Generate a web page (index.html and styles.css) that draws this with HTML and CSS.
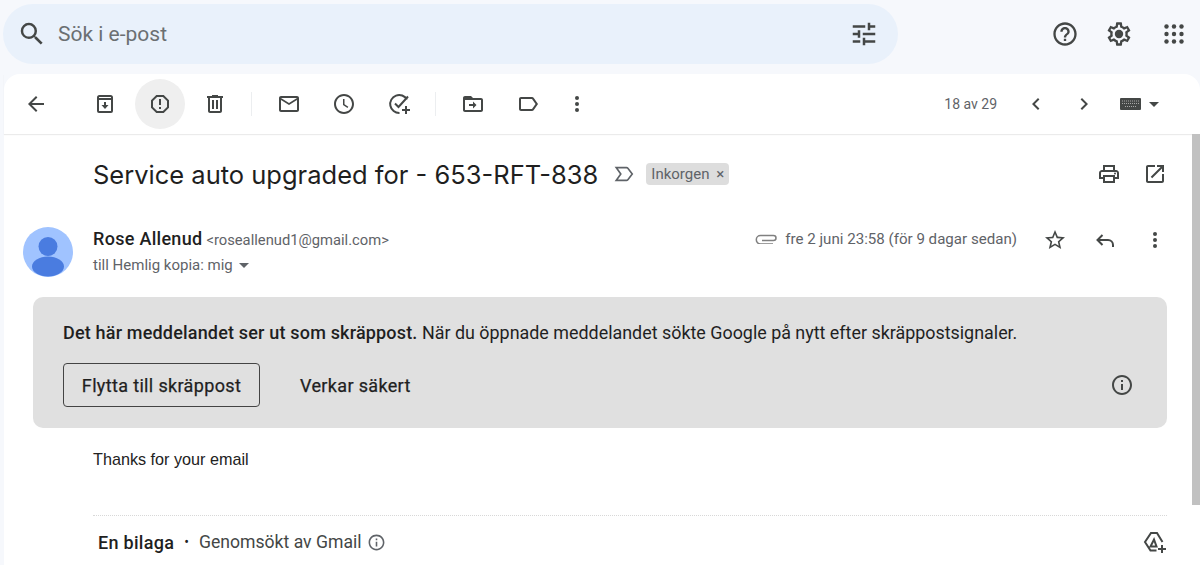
FILE: index.html
```html
<!DOCTYPE html>
<html lang="sv">
<head>
<meta charset="utf-8">
<title>Service auto upgraded for - 653-RFT-838</title>
<link rel="stylesheet" href="styles.css">
</head>
<body>
<header class="top">
  <div class="search">
    <svg class="ic search-ic" viewBox="0 0 24 24"><path d="M15.5 14h-.79l-.28-.27A6.471 6.471 0 0 0 16 9.5 6.5 6.5 0 1 0 9.5 16c1.61 0 3.09-.59 4.23-1.57l.27.28v.79l5 4.99L20.49 19l-4.99-5zm-6 0C7.01 14 5 11.99 5 9.5S7.01 5 9.5 5 14 7.01 14 9.5 11.99 14 9.5 14z"/></svg>
    <span class="search-text">Sök i e-post</span>
    <svg class="ic tune-ic" viewBox="0 0 24 24"><path d="M3 17v2h6v-2H3zM3 5v2h10V5H3zm10 16v-2h8v-2h-8v-2h-2v6h2zM7 9v2H3v2h4v2h2V9H7zm14 4v-2H11v2h10zm-6-4h2V7h4V5h-4V3h-2v6z"/></svg>
  </div>
  <div class="top-actions">
    <svg class="ic big" viewBox="0 0 24 24"><path d="M11 18h2v-2h-2v2zm1-16C6.48 2 2 6.48 2 12s4.48 10 10 10 10-4.48 10-10S17.52 2 12 2zm0 18c-4.41 0-8-3.59-8-8s3.59-8 8-8 8 3.59 8 8-3.59 8-8 8zm0-14c-2.21 0-4 1.79-4 4h2c0-1.1.9-2 2-2s2 .9 2 2c0 2-3 1.75-3 5h2c0-2.25 3-2.5 3-5 0-2.21-1.79-4-4-4z"/></svg>
    <svg class="ic big" viewBox="0 0 24 24"><path d="M19.43 12.98c.04-.32.07-.64.07-.98 0-.34-.03-.66-.07-.98l2.11-1.65c.19-.15.24-.42.12-.64l-2-3.46c-.09-.16-.26-.25-.44-.25-.06 0-.12.01-.17.03l-2.49 1c-.52-.4-1.08-.73-1.69-.98l-.38-2.65C14.46 2.18 14.25 2 14 2h-4c-.25 0-.46.18-.49.42l-.38 2.65c-.61.25-1.17.59-1.69.98l-2.49-1c-.06-.02-.12-.03-.18-.03-.17 0-.34.09-.43.25l-2 3.46c-.13.22-.07.49.12.64l2.11 1.65c-.04.32-.07.65-.07.98 0 .33.03.66.07.98l-2.11 1.65c-.19.15-.24.42-.12.64l2 3.46c.09.16.26.25.44.25.06 0 .12-.01.17-.03l2.49-1c.52.4 1.08.73 1.69.98l.38 2.65c.03.24.24.42.49.42h4c.25 0 .46-.18.49-.42l.38-2.65c.61-.25 1.17-.59 1.69-.98l2.49 1c.06.02.12.03.18.03.17 0 .34-.09.43-.25l2-3.46c.12-.22.07-.49-.12-.64l-2.11-1.65zm-1.98-1.71c.04.31.05.52.05.73 0 .21-.02.43-.05.73l-.14 1.13.89.7 1.08.84-.7 1.21-1.27-.51-1.04-.42-.9.68c-.43.32-.84.56-1.25.73l-1.06.43-.16 1.13-.2 1.35h-1.4l-.19-1.35-.16-1.13-1.06-.43c-.43-.18-.83-.41-1.23-.71l-.91-.7-1.06.43-1.27.51-.7-1.21 1.08-.84.89-.7-.14-1.13c-.03-.31-.05-.54-.05-.74s.02-.43.05-.73l.14-1.13-.89-.7-1.08-.84.7-1.21 1.27.51 1.04.42.9-.68c.43-.32.84-.56 1.25-.73l1.06-.43.16-1.13.2-1.35h1.39l.19 1.35.16 1.13 1.06.43c.43.18.83.41 1.23.71l.91.7 1.06-.43 1.27-.51.7 1.21-1.07.85-.89.7.14 1.13z"/><circle cx="12" cy="12" r="3.6"/></svg>
    <svg class="ic big" viewBox="0 0 24 24"><circle cx="4.5" cy="4.5" r="2.2"/><circle cx="12" cy="4.5" r="2.2"/><circle cx="19.5" cy="4.5" r="2.2"/><circle cx="4.5" cy="12" r="2.2"/><circle cx="12" cy="12" r="2.2"/><circle cx="19.5" cy="12" r="2.2"/><circle cx="4.5" cy="19.5" r="2.2"/><circle cx="12" cy="19.5" r="2.2"/><circle cx="19.5" cy="19.5" r="2.2"/></svg>
  </div>
</header>
<main class="panel">
  <nav class="toolbar">
    <span class="tb back"><svg class="ic" viewBox="0 0 24 24"><path d="M20 11H7.83l5.59-5.59L12 4l-8 8 8 8 1.41-1.41L7.83 13H20v-2z"/></svg></span>
    <span class="tb first"><svg class="ic" viewBox="0 0 24 24"><path d="M6.5 3h11A2.5 2.5 0 0 1 20 5.5V19a2 2 0 0 1-2 2H6a2 2 0 0 1-2-2V5.5A2.5 2.5 0 0 1 6.5 3zM6 8v11h12V8H6zm.3-3a.5.5 0 0 0-.3.5V6h12v-.5a.5.5 0 0 0-.3-.5H6.300zM11 10h2v3h2.500L12 17l-3.500-4H11v-3z"/></svg></span>
    <span class="tb active"><svg class="ic" viewBox="0 0 24 24"><path d="M15.730 3H8.270L3 8.270v7.460L8.270 21h7.460L21 15.730V8.270L15.730 3zM19 14.900L14.900 19H9.100L5 14.900V9.100L9.100 5h5.800L19 9.100v5.800zM11 7h2v6h-2zM11 15h2v2h-2z"/></svg></span>
    <span class="tb"><svg class="ic" viewBox="0 0 24 24"><path d="M15 4V3H9v1H4v2h1v13c0 1.100.9 2 2 2h10c1.100 0 2-.9 2-2V6h1V4h-5zm2 15H7V6h10v13zM9 8h2v9H9zm4 0h2v9h-2z"/></svg></span>
    <span class="sep"></span>
    <span class="tb"><svg class="ic" viewBox="0 0 24 24"><path d="M22 6c0-1.100-.9-2-2-2H4c-1.100 0-2 .9-2 2v12c0 1.100.9 2 2 2h16c1.100 0 2-.9 2-2V6zm-2 0l-8 5-8-5h16zm0 12H4V8l8 5 8-5v10z"/></svg></span>
    <span class="tb"><svg class="ic" viewBox="0 0 24 24"><path d="M11.990 2C6.470 2 2 6.480 2 12s4.470 10 9.990 10C17.520 22 22 17.520 22 12S17.520 2 11.990 2zM12 20c-4.420 0-8-3.580-8-8s3.580-8 8-8 8 3.580 8 8-3.580 8-8 8zm.5-13H11v6l4.500 3 .8-1.200-3.800-2.500z"/></svg></span>
    <span class="tb"><svg class="ic" viewBox="0 0 24 24"><path class="line" d="M20 7.500A9 9 0 1 0 12.500 21M8 11.500l3.500 3.500L21 4.500"/><path d="M18 14h2v3h3v2h-3v3h-2v-3h-3v-2h3z"/></svg></span>
    <span class="sep"></span>
    <span class="tb"><svg class="ic" viewBox="0 0 24 24"><path d="M20 6h-8l-2-2H4c-1.110 0-1.990.89-1.990 2L2 18c0 1.110.89 2 2 2h16c1.110 0 2-.89 2-2V8c0-1.110-.89-2-2-2zm0 12H4V8h16v10zM12 9.500L15.500 13 12 16.500V14H8v-2h4V9.500z"/></svg></span>
    <span class="tb"><svg class="ic" viewBox="0 0 24 24"><path d="M17.630 5.840C17.270 5.330 16.670 5 16 5L5 5.010C3.900 5.010 3 5.900 3 7v10c0 1.100.9 1.990 2 1.990L16 19c.67 0 1.270-.33 1.630-.84L22 12l-4.370-6.160zM16 17H5V7h11l3.550 5L16 17z"/></svg></span>
    <span class="tb more"><svg class="ic" viewBox="0 0 24 24"><circle cx="12" cy="6" r="2"/><circle cx="12" cy="12" r="2"/><circle cx="12" cy="18" r="2"/></svg></span>
    <span class="pager">18 av 29</span>
    <span class="nav-btn"><svg class="ic" viewBox="0 0 24 24"><path d="M15.410 7.410L14 6l-6 6 6 6 1.410-1.410L10.830 12z"/></svg></span>
    <span class="nav-btn"><svg class="ic" viewBox="0 0 24 24"><path d="M10 6L8.590 7.410 13.170 12l-4.580 4.590L10 18l6-6z"/></svg></span>
    <svg class="keys" viewBox="0 0 21 12"><rect width="21" height="12" rx="1" fill="#444746"/><path d="M2 3h17M2 5.500h17M5 8.500h11" stroke="#a8a8a8" stroke-width="1" stroke-dasharray="1 1" fill="none"/></svg>
    <i class="caret kbd-caret"></i>
  </nav>
  <div class="scroller">
    <article class="mail">
      <div class="subject-row">
        <h1 class="subject">Service auto upgraded for - 653-RFT-838</h1>
        <svg class="ic marker" viewBox="0 0 24 24"><path d="M3.500 5h11.200c.6 0 1.100.3 1.500.8L21 12l-4.800 6.200c-.4.5-.9.800-1.500.8H3.500l5-7-5-7z" class="line thin"/></svg>
        <span class="chip">Inkorgen <span class="chip-x">×</span></span>
        <span class="subject-actions">
          <svg class="ic" viewBox="0 0 24 24"><path d="M19 8h-1V3H6v5H5c-1.660 0-3 1.340-3 3v6h4v4h12v-4h4v-6c0-1.660-1.340-3-3-3zM8 5h8v3H8V5zm8 12v2H8v-4h8v2zm2-2v-2H6v2H4v-4c0-.55.45-1 1-1h14c.55 0 1 .45 1 1v4h-2z"/><circle cx="18" cy="11.500" r="1"/></svg>
          <svg class="ic" viewBox="0 0 24 24"><path d="M19 19H5V5h7V3H5c-1.110 0-2 .9-2 2v14c0 1.100.89 2 2 2h14c1.100 0 2-.9 2-2v-7h-2v7zM14 3v2h3.590l-9.830 9.830 1.410 1.410L19 6.410V10h2V3h-7z"/></svg>
        </span>
      </div>
      <div class="sender-row">
        <svg class="avatar" viewBox="0 0 50 50"><circle cx="25" cy="25" r="25" fill="#a0c3ff"/><circle cx="25" cy="19.500" r="9.500" fill="#4a7ce0"/><ellipse cx="25" cy="39.500" rx="16" ry="10" fill="#4a7ce0"/></svg>
        <div class="sender-info">
          <div class="from"><b class="name">Rose Allenud</b> <span class="addr">&lt;roseallenud1@gmail.com&gt;</span></div>
          <div class="to">till Hemlig kopia: mig <i class="caret to-caret"></i></div>
        </div>
        <svg class="clip" viewBox="0 0 22 12"><path d="M7 8.500H18.500a2.500 2.500 0 0 0 0-5H5.500a4.200 4.200 0 0 0 0 8.400H18"/></svg>
        <span class="date">fre 2 juni 23:58 (för 9 dagar sedan)</span>
        <span class="msg-actions">
          <svg class="ic" viewBox="0 0 24 24"><path d="M22 9.240l-7.190-.62L12 2 9.190 8.630 2 9.240l5.460 4.730L5.820 21 12 17.270 18.180 21l-1.630-7.030L22 9.240zM12 15.400l-3.760 2.270 1-4.280-3.320-2.880 4.380-.38L12 6.100l1.710 4.040 4.380.38-3.320 2.880 1 4.280L12 15.400z"/></svg>
          <svg class="ic" viewBox="0 0 24 24"><path class="line" d="M9.500 17L4.500 12l5-5M4.500 12H15a5 5 0 0 1 5 5v2"/></svg>
          <svg class="ic" viewBox="0 0 24 24"><circle cx="12" cy="6" r="2"/><circle cx="12" cy="12" r="2"/><circle cx="12" cy="18" r="2"/></svg>
        </span>
      </div>
      <section class="banner">
        <p class="banner-text"><b class="strong">Det här meddelandet ser ut som skräppost.</b> När du öppnade meddelandet sökte Google på nytt efter skräppostsignaler.</p>
        <div class="banner-actions">
          <button class="btn outlined">Flytta till skräppost</button>
          <button class="btn plain">Verkar säkert</button>
          <svg class="ic banner-info" viewBox="0 0 24 24"><path d="M11 7h2v2h-2zm0 4h2v6h-2zm1-9C6.480 2 2 6.480 2 12s4.480 10 10 10 10-4.480 10-10S17.520 2 12 2zm0 18c-4.410 0-8-3.590-8-8s3.590-8 8-8 8 3.590 8 8-3.590 8-8 8z"/></svg>
        </div>
      </section>
      <p class="body-text">Thanks for your email</p>
      <div class="attachments">
        <b class="att-title">En bilaga</b>
        <span class="att-dot">•</span>
        <span class="att-scan">Genomsökt av Gmail</span>
        <svg class="ic att-info" viewBox="0 0 24 24"><path d="M11 7h2v2h-2zm0 4h2v6h-2zm1-9C6.480 2 2 6.480 2 12s4.480 10 10 10 10-4.480 10-10S17.520 2 12 2zm0 18c-4.410 0-8-3.590-8-8s3.590-8 8-8 8 3.590 8 8-3.590 8-8 8z"/></svg>
        <svg class="ic att-drive" viewBox="0 0 24 24"><path class="line" d="M13.500 20.500H7.500L2 12l6-9h6l5.500 9M7.500 16.500h6L11 9.500l-3.500 7z"/><path d="M18 15h2v3h3v2h-3v3h-2v-3h-3v-2h3z"/></svg>
      </div>
    </article>
    <div class="scrollbar"></div>
  </div>
</main>
</body>
</html>
```
FILE: styles.css
```css
* { box-sizing: border-box; }
html, body { margin: 0; height: 565px; overflow: hidden; }
body {
  background: #f6f8fc;
  font-family: Roboto, "Liberation Sans", sans-serif;
  color: #202124;
}
.ic { width: 24px; height: 24px; fill: #444746; display: block; flex: none; }
.line { fill: none; stroke: #444746; stroke-width: 2; }
.thin { stroke: #5f6368; stroke-width: 1.8; }

.top { display: flex; align-items: center; height: 74px; padding: 4px 0 10px 3px; }
.search {
  width: 895px; height: 60px; border-radius: 30px; background: #e9f1fb;
  display: flex; align-items: center; padding: 0 19px 0 14px;
}
.search-ic { width: 30px; height: 30px; }
.tune-ic { width: 30px; height: 30px; }
.search-text { font-size: 21px; color: #6b6f72; margin-left: 11px; flex: 1; }
.top-actions { display: flex; align-items: center; gap: 26px; margin-left: 153px; }
.top-actions .big { width: 28px; height: 28px; }
.top-actions .big:last-child { width: 24px; height: 24px; margin-left: 3px; }

.panel { margin-left: 4px; background: #fff; border-radius: 16px 16px 0 0; height: 491px; }
.toolbar {
  display: flex; align-items: center; height: 60px; padding-left: 16px;
  box-shadow: 0 1px 1px rgba(0,0,0,.08);
}
.tb { width: 50px; height: 50px; border-radius: 50%; display: flex; align-items: center; justify-content: center; margin-right: 5px; flex: none; }
.back { width: 32px; margin-right: 0; }
.first { margin-left: 28px; }
.active { background: #efefef; }
.sep { width: 1px; height: 24px; background: #eceef0; margin: 0 12px 0 6px; flex: none; }
.more { margin-left: -6px; margin-right: 0; }
.pager { font-size: 14px; color: #5f6368; margin-left: auto; margin-right: 27px; }
.nav-btn { width: 24px; height: 24px; margin-right: 24px; }
.keys { width: 21px; height: 12px; flex: none; margin-right: 8px; }
.caret { display: block; width: 0; height: 0; border: 5px solid transparent; border-top-color: #444746; border-bottom-width: 0; }
.kbd-caret { margin-right: 41px; }

.scroller { display: flex; align-items: flex-start; height: 431px; }
.mail { width: 1188px; padding-left: 19px; }
.scrollbar { width: 8px; height: 371px; background: #c1c1c1; }

.subject-row { display: flex; align-items: center; height: 40px; margin-top: 20px; padding-left: 70px; }
.subject { margin: 0; font-weight: 400; font-size: 25.5px; color: #1f1f1f; font-family: Inter, Roboto, sans-serif; white-space: nowrap; }
.marker { width: 22px; height: 22px; margin-left: 15px; }
.chip { background: #dddddd; border-radius: 4px; height: 22px; font-size: 15px; line-height: 22px; padding: 0 5px 0 5px; margin-left: 11px; color: #5f6368; white-space: nowrap; }
.chip-x { margin-left: 3px; }
.subject-actions { display: flex; gap: 22px; margin-left: auto; margin-right: 25px; }

.sender-row { display: flex; align-items: flex-start; margin-top: 33px; height: 50px; }
.avatar { width: 50px; height: 50px; flex: none; }
.sender-info { margin-left: 20px; }
.from { line-height: 20px; margin-top: 2px; white-space: nowrap; }
.name { font-size: 18px; font-weight: 500; color: #1f1f1f; letter-spacing: .3px; }
.addr { font-size: 14.75px; color: #5f6368; }
.to { font-size: 15px; color: #5f6368; line-height: 20px; margin-top: 5px; display: flex; align-items: center; }
.to-caret { margin-left: 6px; border-top-color: #5f6368; }
.clip { width: 22px; height: 12px; fill: none; stroke: #808080; stroke-width: 1.5; margin-left: auto; margin-top: 5px; flex: none; }
.date { font-size: 15.1px; color: #5f6368; margin-left: 8px; margin-top: 2px; line-height: 20px; white-space: nowrap; }
.msg-actions { display: flex; gap: 26px; margin-left: 26px; margin-right: 25px; margin-top: 1px; }

.banner { width: 1134px; height: 131px; margin: 20px 0 0 10px; background: #e0e0e0; border-radius: 10px; padding: 26px 30px 0; }
.banner-text { margin: 0; font-size: 17.9px; line-height: 20px; color: #1f1f1f; white-space: nowrap; }
.strong { font-weight: 500; font-size: 18px; letter-spacing: .18px; }
.banner-actions { display: flex; align-items: center; margin-top: 20px; }
.btn { font: 400 18px Roboto, sans-serif; color: #1f1f1f; background: none; height: 44px; padding: 0; letter-spacing: .35px; -webkit-text-stroke: .25px #1f1f1f; }
.outlined { width: 197px; border: 1.5px solid #444; border-radius: 4px; }
.plain { border: 0; margin-left: 40px; }
.banner-info { margin-left: auto; margin-right: 3px; }

.body-text { margin: 21px 0 0 70px; font: 16.2px/20px "Liberation Sans", sans-serif; color: #222; }
.attachments {
  display: flex; align-items: center; margin: 46px 0 0 70px; width: 1074px; height: 53px;
  border-top: 1px dotted #d8d8d8; padding-left: 5px; font-size: 17.6px;
}
.att-title { font-weight: 500; font-size: 18px; letter-spacing: .3px; color: #1f1f1f; }
.att-dot { margin: 0 10px; font-size: 14px; }
.att-scan { color: #444746; }
.att-info { width: 19px; height: 19px; margin-left: 5px; fill: #5f6368; }
.att-drive { margin-left: auto; margin-right: 0; }
```
